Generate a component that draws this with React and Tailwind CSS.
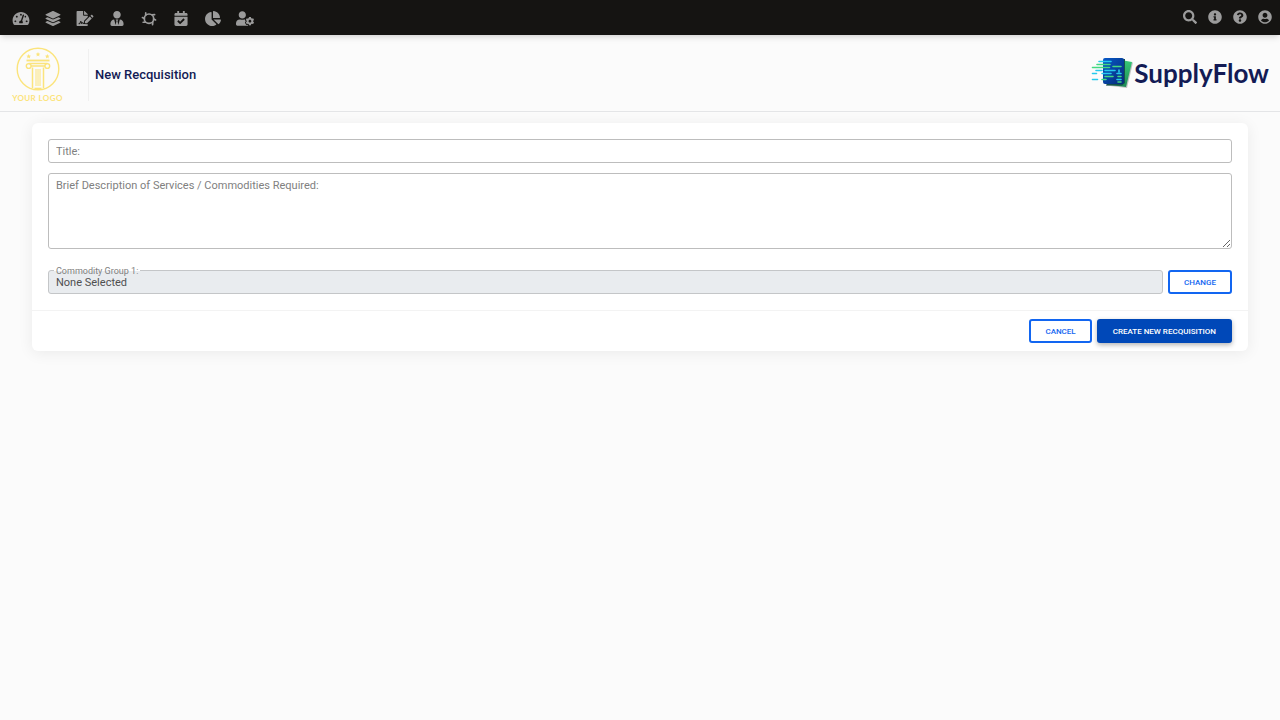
import {
  FaTachometerAlt,
  FaLayerGroup,
  FaFileSignature,
  FaUserTie,
  FaCalendarCheck,
  FaChartPie,
  FaUserCog,
  FaSearch,
  FaInfoCircle,
  FaQuestionCircle,
  FaUserCircle,
} from "react-icons/fa";

const WorkflowIcon = ({ className }) => (
  <svg viewBox="0 0 16 16" className={className} fill="none" stroke="currentColor">
    <circle cx="8" cy="8.2" r="5" strokeWidth="1.8" />
    <path d="M4.5 4.5 4.5 2M11 4 14 3.8M12 11.5 11.8 14.5M4.5 12 1.8 12M3 8 1 7M13 8.500 15 9.500" strokeWidth="1.8" strokeLinecap="round" />
  </svg>
);

const mainLinks = [
  { label: "Dashboard", icon: FaTachometerAlt },
  { label: "Catalog", icon: FaLayerGroup },
  { label: "Contracts", icon: FaFileSignature },
  { label: "Suppliers", icon: FaUserTie },
  { label: "Workflow", icon: WorkflowIcon },
  { label: "Calendar", icon: FaCalendarCheck },
  { label: "Reports", icon: FaChartPie },
  { label: "User settings", icon: FaUserCog },
];

const sideLinks = [
  { label: "Search", icon: FaSearch },
  { label: "Information", icon: FaInfoCircle },
  { label: "Help", icon: FaQuestionCircle },
  { label: "Account", icon: FaUserCircle },
];

const NavBar = () => (
  <nav className="relative flex h-[35px] items-start justify-between bg-[#151412] pl-[5px] pr-[3px] text-[#9b9b9b] shadow-md">
    <div className="flex pt-[11px]">
      {mainLinks.map(({ label, icon: Icon }) => (
        <a key={label} href="#" aria-label={label} className="flex w-8 justify-center hover:text-white">
          <Icon className="h-[15px] w-[18px] shrink-0" />
        </a>
      ))}
    </div>
    <div className="flex pt-[10px]">
      {sideLinks.map(({ label, icon: Icon }) => (
        <a key={label} href="#" aria-label={label} className="flex w-[25px] justify-center hover:text-white">
          <Icon className="h-[14px] w-[14px] shrink-0" />
        </a>
      ))}
    </div>
  </nav>
);

const ClientLogo = () => (
  <div className="flex w-[53px] flex-col items-center text-[#fbe47c]">
    <svg viewBox="0 0 44 44" className="h-11 w-11" fill="none" stroke="currentColor">
      <circle cx="22" cy="22" r="20.8" strokeWidth="1.4" />
      <g fill="currentColor" stroke="none">
        <path d="m22 5 .7 1.5 1.6.2-1.2 1.1.3 1.6-1.4-.8-1.4.8.3-1.6-1.2-1.1 1.6-.2Z" />
        <path d="m12.7 7 .7 1.5 1.6.2-1.2 1.1.3 1.6-1.4-.8-1.4.8.3-1.6-1.2-1.1 1.6-.2Z" />
        <path d="m31.3 7 .7 1.5 1.6.2-1.2 1.1.3 1.6-1.4-.8-1.4.8.3-1.6-1.2-1.1 1.6-.2Z" />
      </g>
      <path d="M10.5 13.5h23" strokeWidth="1.8" />
      <path d="M12.5 16.5h19M15 19h14" strokeWidth="1.4" />
      <circle cx="12.7" cy="19" r="2.4" strokeWidth="1.4" />
      <circle cx="31.3" cy="19" r="2.4" strokeWidth="1.4" />
      <path d="M16.5 20.5V41M27.5 20.5V41" strokeWidth="1.5" />
      <path d="M20 22v17M22 22v17M24 22v17" strokeWidth="1" />
      <path d="M18.5 41.5h7" strokeWidth="1.6" />
    </svg>
    <span className="mt-[2px] whitespace-nowrap font-['Lato'] text-[8px] font-bold leading-[10px] tracking-wider">
      YOUR LOGO
    </span>
  </div>
);

const BrandMark = () => (
  <svg viewBox="0 0 42 32" className="mr-px h-8 w-[42px]">
    <defs>
      <linearGradient id="card" x1="0" y1="0" x2="1" y2="1">
        <stop offset="0" stopColor="#0759c8" />
        <stop offset="1" stopColor="#062a78" />
      </linearGradient>
      <linearGradient id="back" x1="0" y1="0" x2="0" y2="1">
        <stop offset="0" stopColor="#38c977" />
        <stop offset="1" stopColor="#1d8a55" />
      </linearGradient>
    </defs>
    <path d="M19 4 42 5.500 36 31 15 28.500Z" fill="#555" opacity=".35" />
    <path d="M30 3 41 5 35 30 16 27.500Z" fill="url(#back)" />
    <path d="M30 2h4v24l-3 2.500H15Z" fill="#14524a" />
    <rect x="12" y="1" width="21" height="26" rx="2" fill="url(#card)" />
    <g fill="none" strokeWidth="1.6" strokeLinecap="round">
      <path d="M8 4.500h12M5 13.500h6M14 13.500h10M11 16.500h9M1.500 16.500h4M1.500 22.500h5M28 13v2M26 16.500h4M26 22.500h4" stroke="#25c9ed" />
      <path d="M6 7.500h13M1.500 10.500h17M22 9.500h8M14 19.500h8M11 22.500h4M27 19.500h3M27 25h3" stroke="#42d982" />
    </g>
  </svg>
);

const Header = () => (
  <header className="flex h-[77px] items-center justify-between border-b border-[#e4e5e7] px-[11px]">
    <div className="flex items-center pt-1">
      <ClientLogo />
      <div className="ml-6 flex h-[52px] items-center border-l border-[#f0f0f0] pl-[6px]">
        <h1 className="text-[13px] font-medium leading-5 text-[#131b55]">New Recquisition</h1>
      </div>
    </div>
    <a href="#" className="flex items-center font-['Lato'] text-[26px] font-bold leading-8 text-[#131b55]">
      <BrandMark />
      SupplyFlow
    </a>
  </header>
);

const outlineButton =
  "h-6 rounded-[3px] border-2 border-[#1266f1] bg-white px-[14px] pt-[2px] text-[8px] font-medium uppercase leading-[18px] text-[#1266f1] hover:bg-blue-50";

const RequisitionForm = () => (
  <form
    onSubmit={(e) => e.preventDefault()}
    className="mx-8 mt-[11px] rounded-md bg-white text-[11px] shadow-[0_2px_15px_rgba(0,0,0,0.07)]"
  >
    <div className="flex flex-col p-4">
      <input
        aria-label="Title"
        placeholder="Title:"
        className="h-6 w-full rounded-[3px] border border-[#bdbdbd] px-[7px] text-[#4f4f4f] placeholder:text-[#808080]"
      />
      <textarea
        aria-label="Brief Description of Services / Commodities Required"
        placeholder="Brief Description of Services / Commodities Required:"
        className="mt-[10px] h-[76px] w-full rounded-[3px] border border-[#bdbdbd] px-[7px] py-1 leading-4 text-[#4f4f4f] placeholder:text-[#808080]"
      />
      <div className="mt-[21px] flex gap-[5px]">
        <div className="relative flex-1">
          <input
            id="commodity"
            readOnly
            defaultValue="None Selected"
            className="h-6 w-full rounded-[3px] border border-[#c4c6c8] bg-[#e9ecef] px-[7px] text-[#4f4f4f]"
          />
          <label
            htmlFor="commodity"
            className="absolute -top-1 left-[6px] bg-linear-to-b from-white from-50% to-[#e9ecef] to-50% px-[2px] text-[9px] leading-[10px] text-[#808080]"
          >
            Commodity Group 1:
          </label>
        </div>
        <button type="button" className={outlineButton}>
          Change
        </button>
      </div>
    </div>
    <div className="flex justify-end gap-[5px] border-t border-[#f3f3f3] px-4 py-2">
      <button type="button" className={outlineButton}>
        Cancel
      </button>
      <button
        type="submit"
        className="h-6 rounded-[3px] bg-[#0048b8] px-4 pt-[2px] text-[8px] font-medium uppercase leading-[22px] text-white shadow-[0_2px_5px_rgba(0,0,0,0.3)] hover:bg-[#003c9c]"
      >
        Create New Recquisition
      </button>
    </div>
  </form>
);

export default function App() {
  return (
    <div className="min-h-screen bg-[#fbfbfb] font-['Roboto',sans-serif]">
      <NavBar />
      <Header />
      <main>
        <RequisitionForm />
      </main>
    </div>
  );
}
